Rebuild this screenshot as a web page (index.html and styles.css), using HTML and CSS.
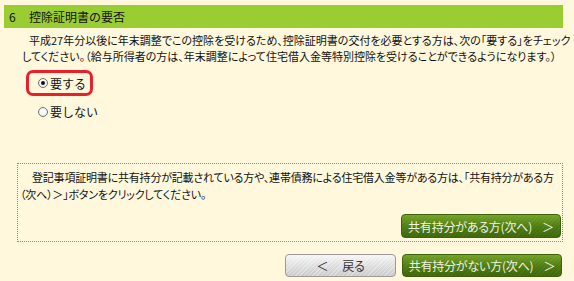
FILE: index.html
```html
<!DOCTYPE html>
<html lang="ja">
<head>
<meta charset="utf-8">
<link rel="stylesheet" href="styles.css">
</head>
<body>
<div class="page">
  <div class="section-head"><span class="num">6</span><span class="title">控除証明書の要否</span></div>
  <p class="lead">平成27年分以後に年末調整でこの控除を受けるため、控除証明書の交付を必要とする方は、次の「要する」をチェック<br>してください。（給与所得者の方は、年末調整によって住宅借入金等特別控除を受けることができるようになります。）</p>
  <div class="choices">
    <label class="choice highlight"><span class="radio checked"></span><span>要する</span></label>
    <label class="choice"><span class="radio"></span><span>要しない</span></label>
  </div>
  <div class="note-box">
    <p class="note">登記事項証明書に共有持分が記載されている方や、連帯債務による住宅借入金等がある方は、「共有持分がある方<br>（次へ）＞」ボタンをクリックしてください。</p>
    <div class="box-actions"><a class="btn green">共有持分がある方(次へ)<span class="arrow">＞</span></a></div>
  </div>
  <div class="actions">
    <a class="btn gray"><span class="arrow-l">＜</span>戻る</a>
    <a class="btn green">共有持分がない方(次へ)<span class="arrow">＞</span></a>
  </div>
</div>
</body>
</html>
```
FILE: styles.css
```css
html, body {
  margin: 0;
  padding: 0;
  background: #fff8dc;
}
body {
  font-family: "Noto Sans CJK JP", "Liberation Sans", sans-serif;
  font-size: 11px;
  color: #111;
}
.page {
  width: 559px;
  padding: 5px 0 0 4px;
}
.section-head {
  height: 23px;
  background: #9acd32;
  display: flex;
  align-items: center;
  font-size: 12px;
}
.section-head .num {
  width: 25px;
  padding-left: 5px;
  box-sizing: border-box;
}
.lead {
  margin: 4px 0 0 0;
  padding-left: 18px;
  text-indent: 7px;
  line-height: 16px;
  letter-spacing: 0;
  white-space: nowrap;
  font-feature-settings: "palt";
}
.choices {
  margin: 6px 0 0 22px;
  display: flex;
  flex-direction: column;
  align-items: flex-start;
}
.choice {
  display: flex;
  align-items: center;
  gap: 2px;
  font-size: 12px;
  height: 25px;
  padding: 0 0 0 12px;
  box-sizing: border-box;
}
.choice.highlight {
  border: 3px solid #e8202a;
  border-radius: 7px;
  width: 67px;
  height: 26px;
  padding-left: 9px;
  margin-bottom: 3px;
}
.radio {
  width: 10px;
  height: 10px;
  border-radius: 50%;
  border: 1px solid #707070;
  background: radial-gradient(circle at 50% 40%, #fff 0, #e8e8e8 100%);
  box-sizing: border-box;
  position: relative;
  flex: none;
}
.radio.checked::after {
  content: "";
  position: absolute;
  left: 2px;
  top: 2px;
  width: 4px;
  height: 4px;
  border-radius: 50%;
  background: #111;
}
.note-box {
  margin: 39px 0 0 13px;
  border: 1px dotted #8a8a8a;
  height: 79px;
  box-sizing: border-box;
  padding: 5px 1px 0 2px;
}
.note {
  margin: 0;
  text-indent: 12px;
  line-height: 17px;
  letter-spacing: -0.2px;
  white-space: nowrap;
  font-feature-settings: "palt";
}
.box-actions {
  display: flex;
  justify-content: flex-end;
  margin-top: 11px;
}
.btn {
  display: inline-flex;
  align-items: center;
  justify-content: center;
  height: 24px;
  box-sizing: border-box;
  border-radius: 4px;
  font-size: 12px;
  font-feature-settings: "palt";
  letter-spacing: -0.2px;
}
.btn.green {
  width: 160px;
  color: #eef4e2;
  border: 1px solid #3d620c;
  background:
    repeating-linear-gradient(135deg, rgba(255,255,255,0.05) 0 1px, rgba(255,255,255,0) 1px 3px),
    linear-gradient(#74a325, #4d7a12 55%, #3e660a);
}
.btn .arrow {
  margin-left: 10px;
}
.actions {
  display: flex;
  justify-content: flex-end;
  gap: 6px;
  margin-top: 12px;
  padding-right: 1px;
}
.actions .btn {
  height: 23px;
}
.btn.gray {
  width: 111px;
  color: #333;
  border: 1px solid #9a9a9a;
  background:
    repeating-linear-gradient(135deg, rgba(255,255,255,0.35) 0 1px, rgba(255,255,255,0) 1px 3px),
    linear-gradient(#f6f6f6, #dadada 60%, #cacaca);
}
.btn .arrow-l {
  margin-right: 14px;
}
```
